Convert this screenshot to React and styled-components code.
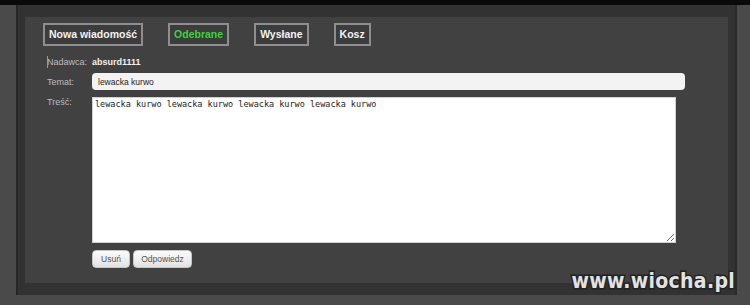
import React from 'react';
import styled, { createGlobalStyle } from 'styled-components';

const GlobalStyle = createGlobalStyle`
    html, body {
        margin: 0;
        padding: 0;
        background: #4a4a4a;
        font-family: "Liberation Sans", Arial, sans-serif;
    }
`;

const Page = styled.div`
    position: relative;
    width: 750px;
    height: 305px;
    overflow: hidden;
    background: #4a4a4a;
`;

const TopBar = styled.div`
    height: 5px;
    background: #0a0a0a;
`;

const Frame = styled.div`
    margin-left: 16px;
    width: 721px;
    height: 290px;
    box-sizing: border-box;
    padding: 12px 7px;
    background: #323232;
    border-left: 2px solid #272727;
    border-right: 2px solid #2a2a2a;
`;

const Panel = styled.div`
    height: 266px;
    box-sizing: border-box;
    padding: 6px 18px;
    background: #414141;
    display: flex;
    flex-direction: column;
`;

const Nav = styled.div`
    display: flex;
    gap: 25px;
`;

const NavButton = styled.div`
    height: 23px;
    box-sizing: border-box;
    padding: 0 4px;
    border: 2px solid #8e8e8e;
    background: #3c3c3c;
    color: ${({ active }) => (active ? '#3bd33b' : '#f2f2f2')};
    font-size: 10.5px;
    font-weight: bold;
    line-height: 19px;
    white-space: nowrap;
`;

const Form = styled.div`
    margin-top: 10px;
    display: grid;
    grid-template-columns: 49px 1fr;
    row-gap: 5px;
    align-items: center;
`;

const Label = styled.div`
    position: relative;
    padding-left: 4px;
    color: #bdbdbd;
    font-size: 9px;
    align-self: ${({ top }) => (top ? 'start' : 'center')};
    padding-top: ${({ top }) => (top ? '2px' : '0')};
`;

const Caret = styled.span`
    position: absolute;
    left: 4px;
    top: -1px;
    height: 12px;
    border-left: 1px solid #9a9a9a;
`;

const Sender = styled.div`
    color: #f0f0f0;
    font-size: 9px;
    font-weight: bold;
    line-height: 12px;
`;

const TextInput = styled.input`
    width: 593px;
    height: 17px;
    box-sizing: border-box;
    padding: 0 6px;
    border: none;
    border-radius: 4px;
    background: #f3f3f3;
    color: #222;
    font-family: "Liberation Sans", Arial, sans-serif;
    font-size: 8.5px;
    outline: none;
`;

const TextArea = styled.textarea`
    display: block;
    width: 584px;
    height: 146px;
    box-sizing: border-box;
    margin: 2px 0 0;
    padding: 1px 2px;
    border: 1px solid #d0d0d0;
    background: #fff;
    color: #222;
    font-family: "DejaVu Sans Mono", monospace;
    font-size: 8.5px;
    line-height: 11px;
    outline: none;
`;

const Actions = styled.div`
    grid-column: 2;
    margin-top: 2px;
    display: flex;
    gap: 3px;
`;

const SmallButton = styled.button`
    height: 18px;
    width: ${({ w }) => w}px;
    padding: 0;
    border: 1px solid #c6c6c6;
    border-radius: 4px;
    background: linear-gradient(#fbfbfb, #e2e2e2);
    color: #555;
    font-family: "Liberation Sans", Arial, sans-serif;
    font-size: 8.5px;
`;

const Watermark = styled.div`
    position: absolute;
    right: 15px;
    bottom: 12px;
    font-family: "DejaVu Sans Condensed", "DejaVu Sans", sans-serif;
    font-stretch: condensed;
    font-weight: bold;
    font-size: 21px;
    color: #e2e2e2;
    -webkit-text-stroke: 3px #222;
    paint-order: stroke fill;
    letter-spacing: 0.3px;
`;

const navItems = [
    { title: 'Nowa wiadomość' },
    { title: 'Odebrane', active: true },
    { title: 'Wysłane' },
    { title: 'Kosz' },
];

const App = () => {
    return (
        <Page>
            <GlobalStyle />
            <TopBar />
            <Frame>
                <Panel>
                    <Nav>
                        {navItems.map((item, index) => (
                            <NavButton active={item.active} key={index}>
                                {item.title}
                            </NavButton>
                        ))}
                    </Nav>
                    <Form>
                        <Label><Caret />Nadawca:</Label>
                        <Sender>absurd1111</Sender>
                        <Label>Temat:</Label>
                        <TextInput readOnly value="lewacka kurwo" />
                        <Label top>Treść:</Label>
                        <TextArea readOnly value="lewacka kurwo lewacka kurwo lewacka kurwo lewacka kurwo" />
                        <Actions>
                            <SmallButton w={38}>Usuń</SmallButton>
                            <SmallButton w={59}>Odpowiedz</SmallButton>
                        </Actions>
                    </Form>
                </Panel>
            </Frame>
            <Watermark>www.wiocha.pl</Watermark>
        </Page>
    )
}

export default App
